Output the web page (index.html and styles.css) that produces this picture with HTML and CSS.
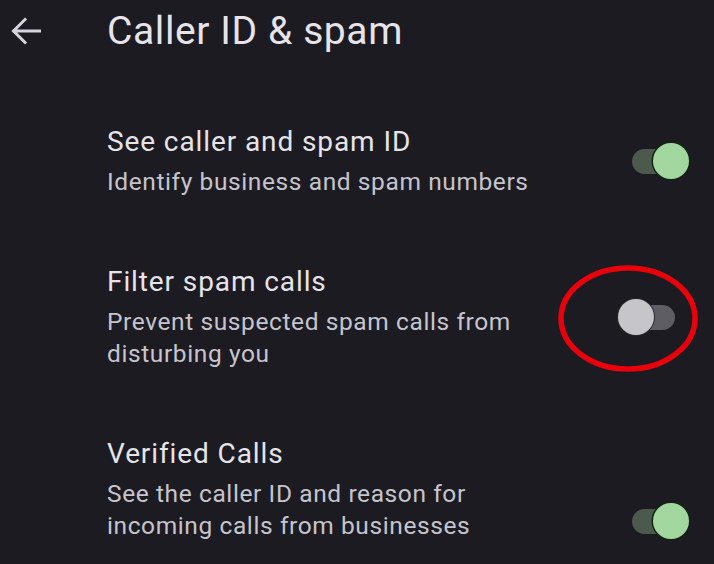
FILE: index.html
```html
<!DOCTYPE html>
<html>
<head>
<meta charset="utf-8">
<link rel="stylesheet" href="styles.css">
</head>
<body>
<div class="screen">
  <header class="appbar">
    <svg class="back" width="30" height="28" viewBox="0 0 30 28" aria-hidden="true">
      <path d="M29 14 H3 M14 2.5 L2.5 14 L14 25.5" fill="none" stroke="#d6d4dc" stroke-width="3" stroke-linecap="square" stroke-linejoin="miter"/>
    </svg>
    <h1 class="title">Caller ID &amp; spam</h1>
  </header>
  <main class="list">
    <div class="row">
      <div class="text">
        <div class="row-title">See caller and spam ID</div>
        <div class="row-sub">Identify business and spam numbers</div>
      </div>
      <div class="switch on"><span class="track"></span><span class="thumb"></span></div>
    </div>
    <div class="row">
      <div class="text">
        <div class="row-title">Filter spam calls</div>
        <div class="row-sub">Prevent suspected spam calls from disturbing you</div>
      </div>
      <div class="switch off">
        <span class="track"></span><span class="thumb"></span>
        <svg class="circle" width="140" height="107" viewBox="0 0 140 107" aria-hidden="true">
          <ellipse cx="70" cy="53.5" rx="67" ry="50.5" fill="none" stroke="#e8000c" stroke-width="5.5"/>
        </svg>
      </div>
    </div>
    <div class="row last">
      <div class="text">
        <div class="row-title">Verified Calls</div>
        <div class="row-sub">See the caller ID and reason for incoming calls from businesses</div>
      </div>
      <div class="switch on bottom"><span class="track"></span><span class="thumb"></span></div>
    </div>
  </main>
</div>
</body>
</html>
```
FILE: styles.css
```css
html, body {
  margin: 0;
  padding: 0;
  background: #1b1b21;
}
body {
  width: 714px;
  height: 564px;
  overflow: hidden;
  font-family: Roboto, "Noto Sans", sans-serif;
  color: #e4e1e8;
}
.screen {
  display: flex;
  flex-direction: column;
}
.appbar {
  display: flex;
  align-items: center;
  height: 62px;
  padding-left: 11px;
}
.back {
  display: block;
}
.title {
  margin: 0 0 0 66px;
  font-size: 39px;
  font-weight: 400;
  line-height: 62px;
  letter-spacing: 0.6px;
  color: #e6e3ea;
}
.list {
  display: flex;
  flex-direction: column;
  gap: 66px;
  padding-top: 62px;
}
.row {
  display: flex;
  align-items: center;
  padding: 0 25px 0 107px;
}
.text {
  flex: 1;
  max-width: 450px;
  margin-right: auto;
}
.row-title {
  font-size: 28px;
  line-height: 36px;
  letter-spacing: 0.9px;
  color: #e6e3ea;
}
.row-sub {
  margin-top: 6px;
  font-size: 24.5px;
  line-height: 32px;
  letter-spacing: 0.6px;
  color: #c6c4cc;
}
.switch {
  position: relative;
  flex: none;
  width: 71px;
  height: 36px;
}
.switch.bottom {
  align-self: flex-end;
  margin-bottom: 3px;
}
.track {
  position: absolute;
  left: 14px;
  top: 5.5px;
  width: 43px;
  height: 25px;
  border-radius: 13px;
}
.thumb {
  position: absolute;
  top: 0;
  width: 36px;
  height: 36px;
  border-radius: 50%;
}
.on .track { background: #4c5a4d; }
.on .thumb {
  left: 35px;
  background: #a2d8a0;
  box-shadow: 0 0 0 1.5px #142414;
}
.off .track { background: #5d5d63; }
.off .thumb {
  left: 0;
  background: #c6c6ca;
  box-shadow: 0 0 0 1px #2a2a30;
}
.circle {
  position: absolute;
  left: -60px;
  top: -34px;
}
```
